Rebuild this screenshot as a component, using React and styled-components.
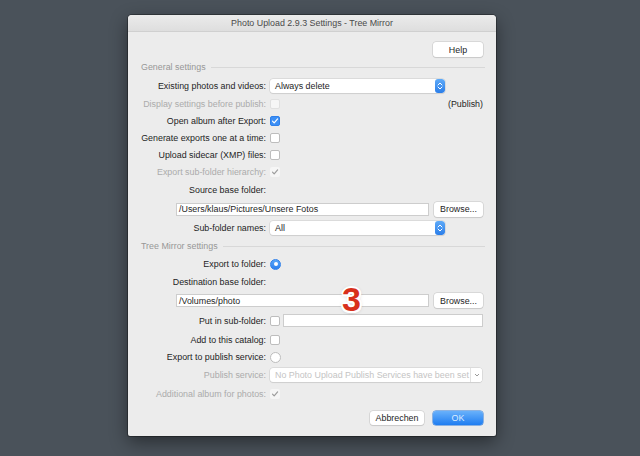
import React from "react"
import styled, { createGlobalStyle } from "styled-components"

const GlobalStyle = createGlobalStyle`
  html, body {
    margin: 0;
    padding: 0;
    background: #4a525a;
  }
  body {
    font-family: "Liberation Sans", Arial, sans-serif;
    font-size: 8.9px;
  }
`

const Page = styled.div`
  width: 640px;
  height: 456px;
  box-sizing: border-box;
  padding: 15px 0 0 128px;
  background: #4a525a;
`

const Window = styled.div`
  position: relative;
  width: 368px;
  height: 421px;
  background: #ececec;
  border-radius: 4px 4px 2px 2px;
  box-shadow: 0 0 0 1px rgba(0, 0, 0, 0.3), 0 6px 18px rgba(0, 0, 0, 0.45);
  display: flex;
  flex-direction: column;
  overflow: hidden;
`

const TitleBar = styled.div`
  height: 16px;
  flex: none;
  display: flex;
  align-items: center;
  justify-content: center;
  background: linear-gradient(#ebebeb, #dedede);
  border-bottom: 1px solid #d0d0d0;
  color: #4a4a4a;
`

const Body = styled.div`
  padding: 0 13px;
  display: flex;
  flex-direction: column;
`

const Row = styled.div`
  display: flex;
  align-items: center;
  height: ${p => p.$h || 17}px;
  margin-top: ${p => p.$mt || 0}px;
  padding-left: ${p => p.$indent || 0}px;
  justify-content: ${p => (p.$end ? "flex-end" : "flex-start")};
  gap: ${p => p.$gap || 0}px;
`

const Label = styled.span`
  width: 125px;
  flex: none;
  text-align: right;
  margin-right: 4px;
  white-space: nowrap;
  color: ${p => (p.$disabled ? "#ababab" : "#1e1e1e")};
`

const Section = styled.div`
  display: flex;
  align-items: center;
  gap: 5px;
  height: ${p => p.$h}px;
  color: #979797;
  &::after {
    content: "";
    flex: 1;
    height: 1px;
    background: #d8d8d8;
    margin-right: -2px;
  }
`

const Button = styled.div`
  width: ${p => p.$w}px;
  height: ${p => p.$ht || 14}px;
  flex: none;
  box-sizing: border-box;
  display: flex;
  align-items: center;
  justify-content: center;
  border-radius: 3px;
  background: ${p => (p.$primary ? "linear-gradient(#69b1fb, #1f7df1)" : "#fff")};
  color: ${p => (p.$primary ? "#dcecff" : "#1e1e1e")};
  box-shadow: ${p =>
    p.$primary
      ? "0 0 0 0.5px #2b78d8"
      : "0 0 0 0.5px #c4c4c4, 0 1px 1px rgba(0,0,0,0.12)"};
`

const Popup = styled.div`
  position: relative;
  width: ${p => p.$w}px;
  height: 14px;
  flex: none;
  box-sizing: border-box;
  display: flex;
  align-items: center;
  padding-left: 5px;
  background: #fff;
  border-radius: 3px;
  box-shadow: 0 0 0 0.5px #cacaca, 0 1px 1px rgba(0, 0, 0, 0.1);
  color: ${p => (p.$disabled ? "#c4c4c4" : "#1e1e1e")};
  white-space: nowrap;
  overflow: hidden;
`

const Stepper = styled.span`
  position: absolute;
  right: 0;
  top: 0;
  width: 10px;
  height: 14px;
  border-radius: 3px;
  background: linear-gradient(#5eaaf8, #2b7ee9);
  display: flex;
  align-items: center;
  justify-content: center;
`

const DisabledArrow = styled.span`
  position: absolute;
  right: 0;
  top: 0;
  width: 11px;
  height: 14px;
  background: #fff;
  border-left: 1px solid #e2e2e2;
  display: flex;
  align-items: center;
  justify-content: center;
`

const Field = styled.div`
  height: 13px;
  box-sizing: border-box;
  flex: ${p => (p.$w ? "none" : 1)};
  width: ${p => (p.$w ? `${p.$w}px` : "auto")};
  background: #fff;
  border: 1px solid #cdcdcd;
  display: flex;
  align-items: center;
  padding-left: 2px;
  color: #1e1e1e;
  white-space: nowrap;
  overflow: hidden;
`

const Box = styled.span`
  width: 10px;
  height: 10px;
  flex: none;
  box-sizing: border-box;
  border-radius: 2px;
  display: flex;
  align-items: center;
  justify-content: center;
  background: ${p => (p.$checked ? "#3c8ff5" : p.$disabled ? "#f6f6f6" : "#fff")};
  border: 1px solid
    ${p => (p.$checked ? "#2f80ea" : p.$disabled ? (p.$mark ? "transparent" : "#e0e0e0") : "#bdbdbd")};
  margin-right: ${p => p.$mr || 0}px;
`

const Radio = styled.span`
  width: 11px;
  height: 11px;
  flex: none;
  box-sizing: border-box;
  border-radius: 50%;
  display: flex;
  align-items: center;
  justify-content: center;
  background: ${p => (p.$checked ? "linear-gradient(#5aa7f8, #2c80ee)" : "#fff")};
  border: 1px solid ${p => (p.$checked ? "#2f80ea" : "#bdbdbd")};
  &::after {
    content: "";
    display: ${p => (p.$checked ? "block" : "none")};
    width: 4px;
    height: 4px;
    border-radius: 50%;
    background: #fff;
  }
`

const Aside = styled.span`
  margin-left: auto;
  color: #1e1e1e;
`

const Footer = styled.div`
  display: flex;
  justify-content: flex-end;
  gap: 9px;
  padding-top: 6px;
`

const Badge = styled.div`
  position: absolute;
  left: 214px;
  top: 267px;
  font-size: 34px;
  line-height: 1;
  font-weight: 700;
  color: #d8301c;
  text-shadow: 0 0 1px #fff, 2px 0 0 #fff, -2px 0 0 #fff, 0 2px 0 #fff,
    0 -2px 0 #fff, 1.5px 1.5px 0 #fff, -1.5px -1.5px 0 #fff,
    1.5px -1.5px 0 #fff, -1.5px 1.5px 0 #fff, 0 1px 4px rgba(0, 0, 0, 0.35);
`

const Check = ({ color = "#fff" }) => (
  <svg width="8" height="8" viewBox="0 0 8 8">
    <path d="M1.5 4.2 L3.2 5.9 L6.6 1.9" fill="none" stroke={color} strokeWidth="1.2" strokeLinecap="round" strokeLinejoin="round" />
  </svg>
)

const Chevrons = () => (
  <svg width="6" height="10" viewBox="0 0 6 10">
    <path d="M1 4 L3 2 L5 4 M1 6 L3 8 L5 6" fill="none" stroke="#fff" strokeWidth="1" strokeLinecap="round" strokeLinejoin="round" />
  </svg>
)

const CheckRow = ({ h, label, disabled, checked, children }) => (
  <Row $h={h}>
    <Label $disabled={disabled}>{label}</Label>
    {disabled && checked ? (
      <Box $disabled $mark>
        <Check color="#9c9c9c" />
      </Box>
    ) : (
      <Box $checked={checked} $disabled={disabled}>
        {checked && <Check />}
      </Box>
    )}
    {children}
  </Row>
)

const App = () => {
  return (
    <Page>
      <GlobalStyle />
      <Window>
        <TitleBar>Photo Upload 2.9.3 Settings - Tree Mirror</TitleBar>
        <Body>
          <Row $h={15} $mt={10} $end>
            <Button $w={50} $ht={15}>Help</Button>
          </Row>
          <Section $h={20}>General settings</Section>
          <Row $h={18}>
            <Label>Existing photos and videos:</Label>
            <Popup $w={175}>
              Always delete
              <Stepper><Chevrons /></Stepper>
            </Popup>
          </Row>
          <CheckRow h={17.5} label="Display settings before publish:" disabled>
            <Aside>(Publish)</Aside>
          </CheckRow>
          <CheckRow h={17} label="Open album after Export:" checked />
          <CheckRow h={17} label="Generate exports one at a time:" />
          <CheckRow h={17} label="Upload sidecar (XMP) files:" />
          <CheckRow h={17.5} label="Export sub-folder hierarchy:" disabled checked />
          <Row $h={18.5}>
            <Label>Source base folder:</Label>
          </Row>
          <Row $h={19} $indent={35} $gap={5}>
            <Field>/Users/klaus/Pictures/Unsere Fotos</Field>
            <Button $w={49} $ht={15}>Browse...</Button>
          </Row>
          <Row $h={18.5}>
            <Label>Sub-folder names:</Label>
            <Popup $w={175}>
              All
              <Stepper><Chevrons /></Stepper>
            </Popup>
          </Row>
          <Section $h={18}>Tree Mirror settings</Section>
          <Row $h={18}>
            <Label>Export to folder:</Label>
            <Radio $checked />
          </Row>
          <Row $h={18}>
            <Label>Destination base folder:</Label>
          </Row>
          <Row $h={19.5} $indent={35} $gap={5}>
            <Field>/Volumes/photo</Field>
            <Button $w={49} $ht={15}>Browse...</Button>
          </Row>
          <Row $h={20}>
            <Label>Put in sub-folder:</Label>
            <Box $mr={3} />
            <Field />
          </Row>
          <CheckRow h={18} label="Add to this catalog:" />
          <Row $h={17}>
            <Label>Export to publish service:</Label>
            <Radio />
          </Row>
          <Row $h={18}>
            <Label $disabled>Publish service:</Label>
            <Popup $w={212} $disabled>
              No Photo Upload Publish Services have been set up
              <DisabledArrow>
                <svg width="6" height="4" viewBox="0 0 6 4">
                  <path d="M1 1 L3 3 L5 1" fill="none" stroke="#9a9a9a" strokeWidth="1" />
                </svg>
              </DisabledArrow>
            </Popup>
          </Row>
          <CheckRow h={21.5} label="Additional album for photos:" disabled checked />
          <Footer>
            <Button $w={54}>Abbrechen</Button>
            <Button $w={50} $primary>OK</Button>
          </Footer>
        </Body>
        <Badge>3</Badge>
      </Window>
    </Page>
  )
}

export default App
